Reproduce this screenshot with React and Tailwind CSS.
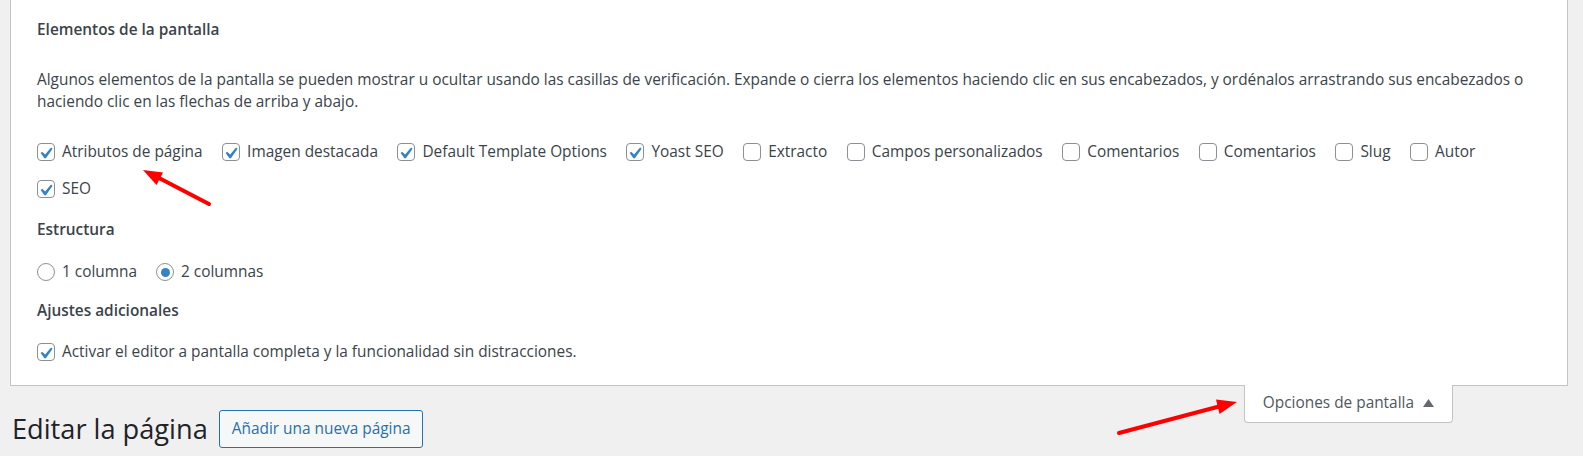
import React from "react";

function CheckIcon() {
  return (
    <svg viewBox="0 0 20 20" className="absolute left-[-4.5px] top-[-2.5px] h-[23px] w-[23px]">
      <path d="M14.83 4.89l1.34.94-5.81 8.38H9.02L5.78 9.67l1.34-1.25 2.57 2.4z" fill="#3582c4" />
    </svg>
  );
}

function Checkbox({ checked }) {
  return (
    <span className="relative inline-block h-[18px] w-[18px] shrink-0 rounded-[4px] border border-[#8c8f94] bg-white">
      {checked && <CheckIcon />}
    </span>
  );
}

function Radio({ checked }) {
  return (
    <span className="flex h-[18px] w-[18px] shrink-0 items-center justify-center rounded-full border border-[#8c8f94] bg-white">
      {checked && <span className="h-[9px] w-[9px] rounded-full bg-[#3582c4]" />}
    </span>
  );
}

function CheckItem({ label, checked }) {
  return (
    <label className="flex h-[22px] items-center gap-[7px]">
      <Checkbox checked={checked} />
      <span>{label}</span>
    </label>
  );
}

const items = [
  ["Atributos de página", true],
  ["Imagen destacada", true],
  ["Default Template Options", true],
  ["Yoast SEO", true],
  ["Extracto", false],
  ["Campos personalizados", false],
  ["Comentarios", false],
  ["Comentarios", false],
  ["Slug", false],
  ["Autor", false],
];

export default function App() {
  return (
    <div className="relative h-[456px] w-full overflow-hidden bg-[#f0f0f1] font-['Open_Sans','Noto_Sans',sans-serif] text-[15.4px] leading-[22px] text-[#3c434a]">
      <div className="ml-[10px] mr-[15px] border border-t-0 border-[#c3c4c7] bg-white px-[26px] pb-[22px] pt-[19px]">
        <div className="font-semibold">Elementos de la pantalla</div>
        <p className="mt-[28px]">
          Algunos elementos de la pantalla se pueden mostrar u ocultar usando las casillas de verificación. Expande o cierra los elementos haciendo clic en sus encabezados, y ordénalos arrastrando sus encabezados o
          <br />
          haciendo clic en las flechas de arriba y abajo.
        </p>
        <div className="mt-[28px] flex gap-x-[19.5px]">
          {items.map(([l, c], i) => (
            <CheckItem key={i} label={l} checked={c} />
          ))}
        </div>
        <div className="mt-[15px] flex">
          <CheckItem label="SEO" checked />
        </div>
        <div className="mt-[19px] font-semibold">Estructura</div>
        <div className="mt-[20px] flex gap-x-[19px]">
          <label className="flex h-[22px] items-center gap-[7px]">
            <Radio />
            <span>1 columna</span>
          </label>
          <label className="flex h-[22px] items-center gap-[7px]">
            <Radio checked />
            <span>2 columnas</span>
          </label>
        </div>
        <div className="mt-[17px] font-semibold">Ajustes adicionales</div>
        <div className="mt-[19px] flex">
          <CheckItem label="Activar el editor a pantalla completa y la funcionalidad sin distracciones." checked />
        </div>
      </div>

      <div className="flex items-start justify-between">
        <div className="mt-[24px] flex items-center gap-[11px] pl-[12px]">
          <h1 className="text-[27.2px] font-normal leading-[38px] text-[#1d2327]">Editar la página</h1>
          <button className="h-[38px] rounded-[3px] border border-[#2271b1] bg-[#f6f7f7] px-[12px] text-[15.4px] leading-[22px] text-[#2271b1]">
            Añadir una nueva página
          </button>
        </div>
        <div className="relative z-10 mr-[130px] mt-[-1px] flex items-center gap-[9px] rounded-b-[4px] border border-t-0 border-[#c3c4c7] bg-white pb-[8px] pl-[18px] pr-[18px] pt-[7px] text-[#50575e]">
          <span>Opciones de pantalla</span>
          <svg width="11" height="8" viewBox="0 0 11 8">
            <path d="M5.5 0 L11 8 L0 8 Z" fill="#646970" />
          </svg>
        </div>
      </div>

      <svg className="pointer-events-none absolute left-0 top-0" width="1583" height="456" viewBox="0 0 1583 456">
        <line x1="209" y1="204" x2="160" y2="178.5" stroke="#ff0000" strokeWidth="4" strokeLinecap="round" />
        <polygon points="143,170 163,172.5 156.5,185" fill="#ff0000" />
        <line x1="1119" y1="433" x2="1219" y2="406.5" stroke="#ff0000" strokeWidth="4" strokeLinecap="round" />
        <polygon points="1237,402 1216,399.5 1219.5,414" fill="#ff0000" />
      </svg>
    </div>
  );
}
